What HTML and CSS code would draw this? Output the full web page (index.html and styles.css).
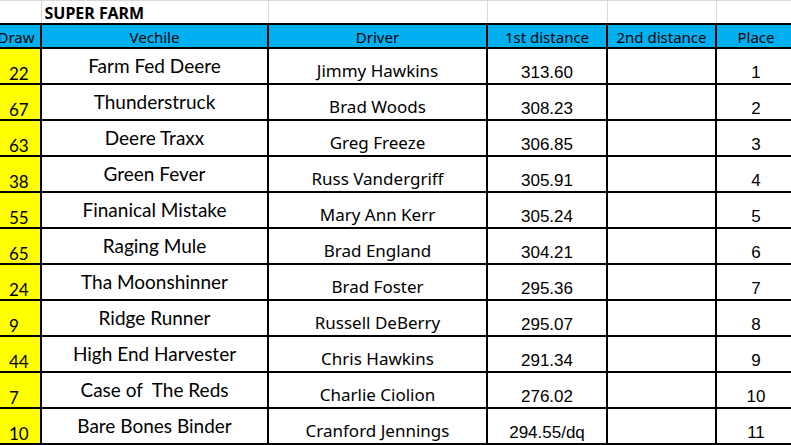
FILE: index.html
```html
<!DOCTYPE html>
<html>
<head>
<meta charset="utf-8">
<link rel="stylesheet" href="styles.css">
</head>
<body>
<table class="sheet">
  <colgroup>
    <col class="c-draw"><col class="c-veh"><col class="c-drv"><col class="c-d1"><col class="c-d2"><col class="c-pl">
  </colgroup>
  <tr class="title-row">
    <td></td><td class="title">SUPER FARM</td><td></td><td></td><td></td><td></td>
  </tr>
  <tr class="head-row">
    <th>Draw</th><th>Vechile</th><th>Driver</th><th>1st distance</th><th>2nd distance</th><th>Place</th>
  </tr>
  <tr class="row"><td class="draw">22</td><td class="veh">Farm Fed Deere</td><td class="drv">Jimmy Hawkins</td><td class="num">313.60</td><td class="num"></td><td class="num">1</td></tr>
  <tr class="row"><td class="draw">67</td><td class="veh">Thunderstruck</td><td class="drv">Brad Woods</td><td class="num">308.23</td><td class="num"></td><td class="num">2</td></tr>
  <tr class="row"><td class="draw">63</td><td class="veh">Deere Traxx</td><td class="drv">Greg Freeze</td><td class="num">306.85</td><td class="num"></td><td class="num">3</td></tr>
  <tr class="row"><td class="draw">38</td><td class="veh">Green Fever</td><td class="drv">Russ Vandergriff</td><td class="num">305.91</td><td class="num"></td><td class="num">4</td></tr>
  <tr class="row"><td class="draw">55</td><td class="veh">Finanical Mistake</td><td class="drv">Mary Ann Kerr</td><td class="num">305.24</td><td class="num"></td><td class="num">5</td></tr>
  <tr class="row"><td class="draw">65</td><td class="veh">Raging Mule</td><td class="drv">Brad England</td><td class="num">304.21</td><td class="num"></td><td class="num">6</td></tr>
  <tr class="row"><td class="draw">24</td><td class="veh">Tha Moonshinner</td><td class="drv">Brad Foster</td><td class="num">295.36</td><td class="num"></td><td class="num">7</td></tr>
  <tr class="row"><td class="draw">9</td><td class="veh">Ridge Runner</td><td class="drv">Russell DeBerry</td><td class="num">295.07</td><td class="num"></td><td class="num">8</td></tr>
  <tr class="row"><td class="draw">44</td><td class="veh">High End Harvester</td><td class="drv">Chris Hawkins</td><td class="num">291.34</td><td class="num"></td><td class="num">9</td></tr>
  <tr class="row"><td class="draw">7</td><td class="veh">Case of&nbsp; The Reds</td><td class="drv">Charlie Ciolion</td><td class="num">276.02</td><td class="num"></td><td class="num">10</td></tr>
  <tr class="row"><td class="draw">10</td><td class="veh">Bare Bones Binder</td><td class="drv">Cranford Jennings</td><td class="num">294.55/dq</td><td class="num"></td><td class="num">11</td></tr>
</table>
</body>
</html>
```
FILE: styles.css
```css
html, body {
  margin: 0;
  padding: 0;
  background: #ffffff;
  overflow: hidden;
}

.sheet {
  border-collapse: collapse;
  table-layout: fixed;
  width: 805px;
  margin-left: -10px;
  margin-top: 0;
  color: #000;
}

.c-draw { width: 50px; }
.c-veh { width: 227px; }
.c-drv { width: 219px; }
.c-d1 { width: 120px; }
.c-d2 { width: 109px; }
.c-pl { width: 80px; }

.sheet td, .sheet th {
  padding: 0;
  white-space: nowrap;
  overflow: hidden;
}

.title-row { height: 23px; }
.head-row { height: 24px; }
.row { height: 36px; }

.title-row td {
  border-left: 1px solid #d9d9d9;
  border-right: 1px solid #d9d9d9;
  border-top: 1px solid #d9d9d9;
  border-bottom: 2px solid #000;
  vertical-align: bottom;
}

.sheet td.title {
  font-family: "Noto Sans", sans-serif;
  font-weight: bold;
  font-size: 16px;
  padding-left: 3px;
  padding-bottom: 1px;
  line-height: 18px;
}

.head-row th {
  background: #00b0f0;
  border: 2px solid #000;
  font-family: "Noto Sans", sans-serif;
  font-weight: normal;
  font-size: 15px;
  line-height: 18px;
  vertical-align: bottom;
  padding-bottom: 1px;
  text-align: center;
}

.row td {
  border: 2px solid #000;
  vertical-align: bottom;
  text-align: center;
  line-height: 20px;
}

.row td.draw {
  background: #ffff00;
  text-align: left;
  padding-left: 17px;
  font-family: "Lato", sans-serif;
  font-size: 17px;
  padding-bottom: 0;
  line-height: 18px;
}

.row td.veh {
  font-family: "Lato", sans-serif;
  font-size: 19px;
  padding-bottom: 7px;
}

.row td.drv {
  font-family: "Noto Sans", sans-serif;
  font-size: 17px;
  padding-bottom: 2px;
}

.row td.num {
  font-family: "Liberation Sans", sans-serif;
  font-size: 17px;
  padding-bottom: 0;
}
```
